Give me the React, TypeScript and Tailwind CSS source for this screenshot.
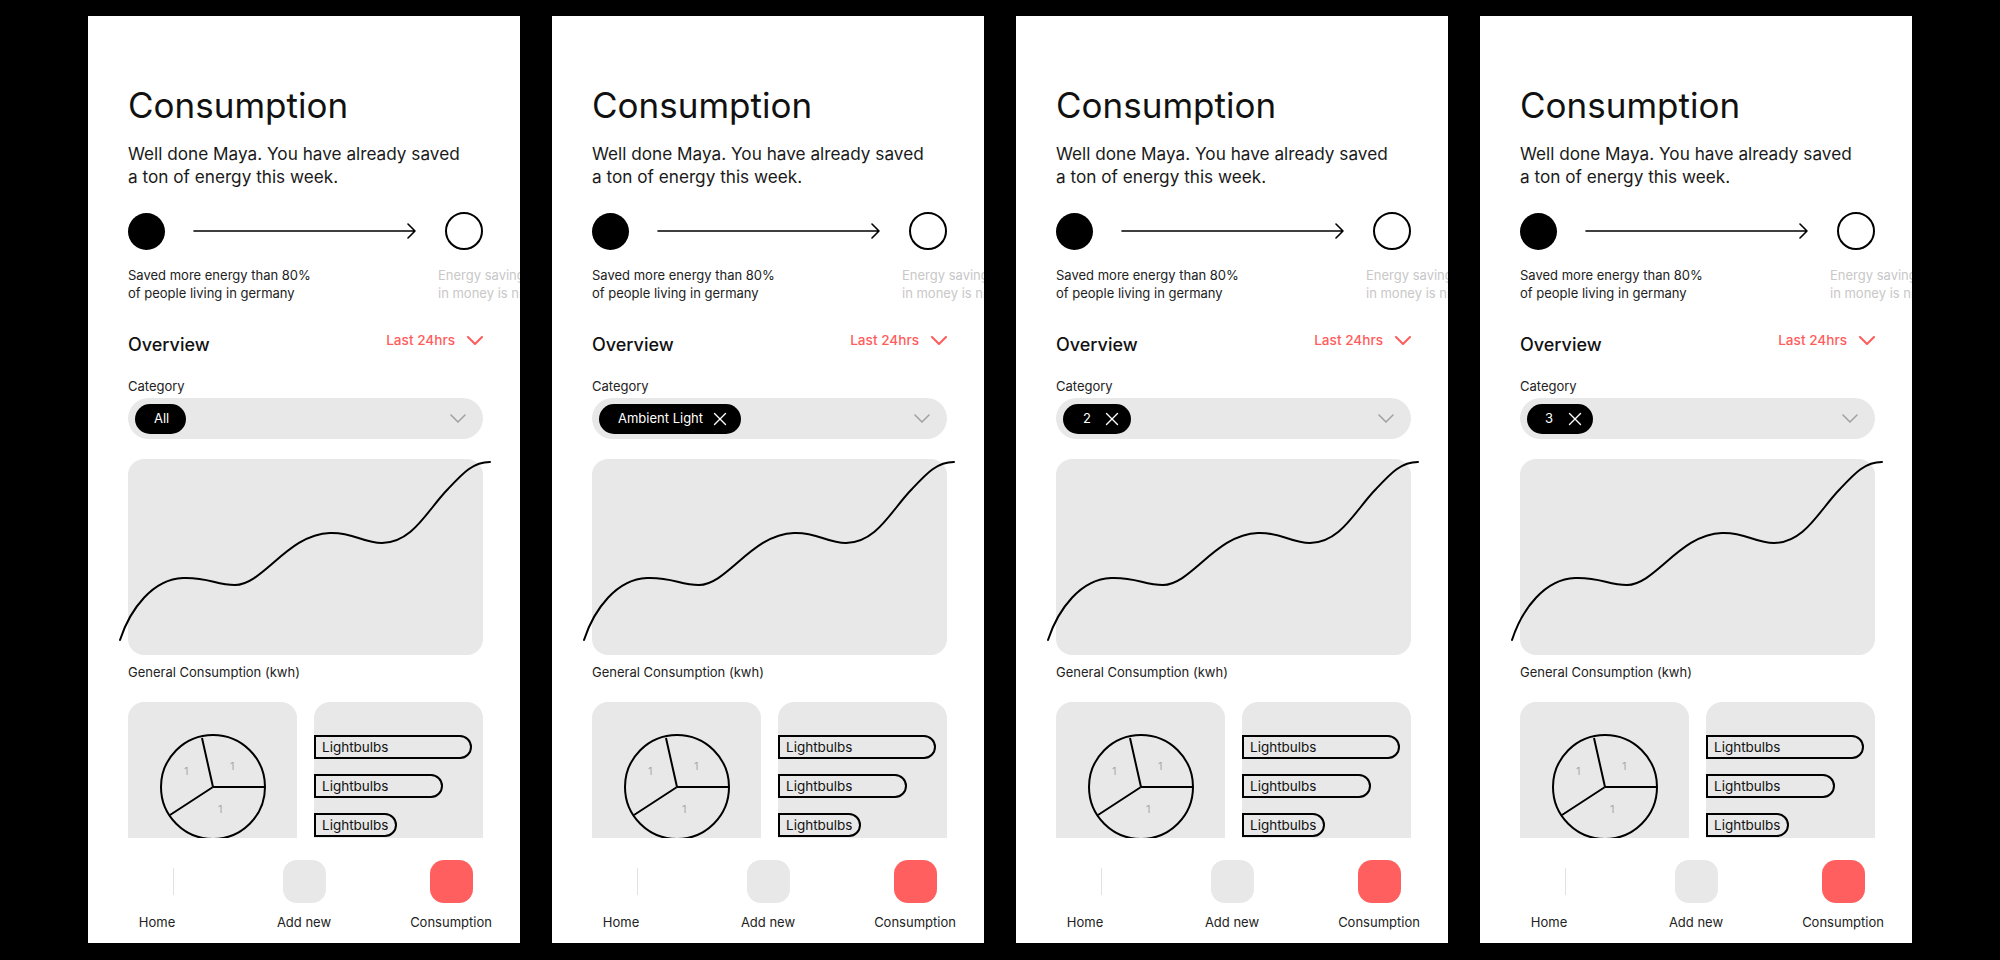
import React from 'react';

// Four variants of the same consumption screen, one per selected category chip.
type Chip = { label: string; removable: boolean; pad: string };

const CHIPS: Chip[] = [
  { label: 'All', removable: false, pad: 'pl-[19px] pr-[17px]' },
  { label: 'Ambient Light', removable: true, pad: 'pl-[19px] pr-[14px] gap-[10px]' },
  { label: '2', removable: true, pad: 'pl-[20px] pr-[12px] gap-[14px]' },
  { label: '3', removable: true, pad: 'pl-[18px] pr-[11px] gap-[15px]' },
];

const BARS = [158, 129, 83];

const XIcon: React.FC = () => (
  <svg width="14" height="14" viewBox="0 0 14 14" fill="none" stroke="white" strokeWidth="1.4" strokeLinecap="round">
    <path d="M1.5 1.5 L12.5 12.5 M12.5 1.5 L1.5 12.5" />
  </svg>
);

const Chevron: React.FC<{ color: string; w: number; h: number; sw: number }> = ({ color, w, h, sw }) => (
  <svg width={w} height={h} viewBox={`0 0 ${w} ${h}`} fill="none" stroke={color} strokeWidth={sw} strokeLinecap="round" strokeLinejoin="round">
    <path d={`M1 1 L${w / 2} ${h - 1} L${w - 1} 1`} />
  </svg>
);

const Phone: React.FC<{ chip: Chip }> = ({ chip }) => (
  <div className="w-[432px] h-[927px] shrink-0 bg-white flex flex-col overflow-hidden">
    <div className="flex-1 min-h-0 overflow-hidden pl-10 pr-[37px] pt-[72px]">
      <h1 className="text-[35px] leading-none font-normal text-[#111]">Consumption</h1>
      <p className="mt-[19px] text-[17.2px] leading-[23px] text-[#1a1a1a]">
        Well done Maya. You have already saved
        <br />
        a ton of energy this week.
      </p>

      {/* Progress */}
      <div className="mt-6 flex items-center gap-7 w-[355px]">
        <div className="w-[37px] h-[37px] rounded-full bg-black shrink-0" />
        <svg width="224" height="16" viewBox="0 0 224 16" fill="none" stroke="black" strokeWidth="1.6" strokeLinecap="round" strokeLinejoin="round" className="shrink-0">
          <path d="M1 8 H222 M215 1 L222 8 L215 15" />
        </svg>
        <div className="w-[38px] h-[38px] rounded-full border-2 border-black shrink-0" />
      </div>
      <div className="mt-4 flex text-[13px] leading-[18px] whitespace-nowrap">
        <div className="w-[310px] shrink-0 text-[#222]">
          Saved more energy than 80%
          <br />
          of people living in germany
        </div>
        <div className="shrink-0 text-[#c8c8c8]">
          Energy savings
          <br />
          in money is nice
        </div>
      </div>

      {/* Overview header */}
      <div className="mt-[34px] flex items-start justify-between">
        <span className="text-[18px] leading-[18px] font-medium text-[#111]">Overview</span>
        <div className="-mt-[5px] flex items-center gap-3 text-[13.6px] leading-[18px] font-medium text-[#ff5c5c]">
          <span>Last 24hrs</span>
          <Chevron color="#ff5c5c" w={16} h={9} sw={2} />
        </div>
      </div>

      <div className="mt-6 text-[13px] leading-4 text-[#222]">Category</div>
      <div className="mt-1 h-[41px] rounded-full bg-[#e8e8e8] flex items-center justify-between pl-[7px] pr-[17px]">
        <div className={`h-[30px] rounded-full bg-black text-white text-[13px] flex items-center ${chip.pad}`}>
          <span>{chip.label}</span>
          {chip.removable && <XIcon />}
        </div>
        <Chevron color="#a0a0a0" w={16} h={9} sw={1.5} />
      </div>

      {/* Line chart */}
      <div className="mt-5 h-[196px] rounded-2xl bg-[#e8e8e8]">
        <svg width="355" height="196" viewBox="0 0 355 196" fill="none" className="overflow-visible">
          <path
            d="M-8 181 C2 150 25 120 55 119 C80 118 88 126 107 126 C135 126 160 75 202 74 C225 73 235 84 254 84 C285 84 300 50 320 30 C335 14 345 3 362 3"
            stroke="black"
            strokeWidth="2"
            strokeLinecap="round"
          />
        </svg>
      </div>
      <div className="mt-[9px] text-[13px] leading-4 text-[#222]">General Consumption (kwh)</div>

      {/* Breakdown cards */}
      <div className="mt-[22px] grid grid-cols-2 gap-[17px]">
        <div className="h-[200px] rounded-t-2xl bg-[#e8e8e8] pt-[31px] flex justify-center">
          <svg width="108" height="108" viewBox="0 0 108 108" fill="none">
            <circle cx="54" cy="54" r="52" stroke="black" strokeWidth="2" />
            <path d="M54 54 L43 5 M54 54 L106 54 M54 54 L11 82" stroke="black" strokeWidth="2" />
            <text x="25" y="42" fontSize="11" fill="#a8a8a8" fontFamily="Inter, sans-serif">1</text>
            <text x="71" y="37" fontSize="11" fill="#a8a8a8" fontFamily="Inter, sans-serif">1</text>
            <text x="59" y="80" fontSize="11" fill="#a8a8a8" fontFamily="Inter, sans-serif">1</text>
          </svg>
        </div>
        <div className="h-[200px] rounded-t-2xl bg-[#e8e8e8] pt-[33px] flex flex-col gap-[15px]">
          {BARS.map((w, i) => (
            <div
              key={i}
              className="h-6 border-2 border-black rounded-r-full flex items-center pl-[6px] text-[13.5px] text-[#111]"
              style={{ width: w }}
            >
              Lightbulbs
            </div>
          ))}
        </div>
      </div>
    </div>

    {/* Bottom navigation */}
    <nav className="h-[105px] shrink-0 flex pl-[9px] gap-[27px] pt-[22px] bg-white">
      <div className="w-[120px] flex flex-col items-center">
        <div className="w-[43px] h-[43px] flex items-center justify-end pr-[5px]">
          <div className="w-px h-[27px] bg-[#e2e2e2]" />
        </div>
        <span className="mt-[11px] text-[13px] leading-4 text-[#222]">Home</span>
      </div>
      <div className="w-[120px] flex flex-col items-center">
        <div className="w-[43px] h-[43px] rounded-[14px] bg-[#e8e8e8]" />
        <span className="mt-[11px] text-[13px] leading-4 text-[#222]">Add new</span>
      </div>
      <div className="w-[120px] flex flex-col items-center">
        <div className="w-[43px] h-[43px] rounded-[14px] bg-[#ff5f5f]" />
        <span className="mt-[11px] text-[13px] leading-4 text-[#222]">Consumption</span>
      </div>
    </nav>
  </div>
);

export default function App() {
  return (
    <div className="w-[2000px] h-[960px] bg-black flex justify-center gap-8 pt-4 font-['Inter',sans-serif]">
      {CHIPS.map((c) => (
        <Phone key={c.label} chip={c} />
      ))}
    </div>
  );
}
